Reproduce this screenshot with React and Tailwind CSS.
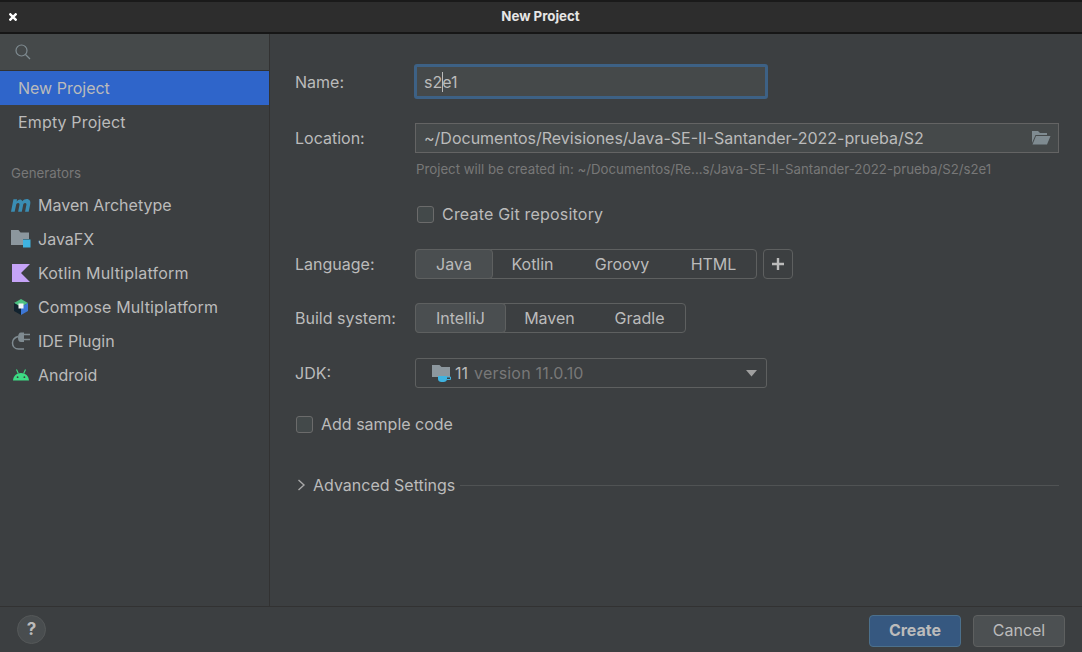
function MavenIcon() {
  return (
    <svg width="20" height="14" viewBox="1 3 16.5 10.2" preserveAspectRatio="none">
      <path d="M1 13 L3 4 H6 L5.7 5.5 C7 3.8 9.5 3.4 10.4 5.4 C12 3.4 15.5 3.2 16.6 5 C17.2 6 17 7 16.7 8.2 L15.6 13 H12.6 L13.7 8 C14 6.6 12.4 6 11.2 7.4 L9.9 13 H6.9 L8 8 C8.3 6.6 6.6 6 5.4 7.4 L4 13 Z" fill="#3a8db3" />
    </svg>
  )
}

function JavaFxIcon() {
  return (
    <svg width="20" height="18" viewBox="0 0 20 18">
      <path d="M0 0 H7.5 L9.5 2.5 H18 V9 H12 V15 H0 Z" fill="#8c979e" />
      <rect x="12" y="9.5" width="7.5" height="8" fill="#3fb3e0" />
    </svg>
  )
}

function KotlinIcon() {
  return (
    <svg width="20" height="20" viewBox="0 0 20 20">
      <path d="M1 1 H19 L10 10 L19 19 H1 Z" fill="#c5a3f7" />
    </svg>
  )
}

function ComposeIcon() {
  return (
    <svg width="18" height="18" viewBox="0 0 18 18">
      <path d="M9 1 L16 5 L9 9 L2 5 Z" fill="#4cc182" />
      <path d="M2 5 L9 9 V17 L2 13 Z" fill="#12232f" />
      <path d="M16 5 V13 L9 17 V9 Z" fill="#3d77d6" />
      <rect x="6.5" y="5.5" width="5" height="5" fill="#f2f5f5" />
    </svg>
  )
}

function PluginIcon() {
  return (
    <svg width="20" height="20" viewBox="0 0 20 20" fill="none">
      <path d="M10 1.5 H13 V11 H10 C8 11 7 9.5 7 6.5 C7 3.5 8 1.5 10 1.5 Z" fill="#7f8b91" />
      <path d="M13 3.5 H19 M13 8.5 H19" stroke="#7f8b91" strokeWidth="1.5" />
      <path d="M7 5.5 C3.5 6.5 1.5 9 1.5 12 C1.5 15.5 4 18 7.5 18 H13" stroke="#7f8b91" strokeWidth="1.5" />
    </svg>
  )
}

function AndroidIcon() {
  return (
    <svg width="18" height="12" viewBox="0 0 18 12" fill="none">
      <path d="M1 11.5 C1.2 7 4.6 4 9 4 C13.4 4 16.8 7 17 11.5 Z" fill="#3ddc84" />
      <path d="M4.5 0.5 L6.3 4.5 M13.5 0.5 L11.7 4.5" stroke="#3ddc84" strokeWidth="1.1" />
      <circle cx="5.6" cy="8.2" r="0.9" fill="#3c3f41" />
      <circle cx="12.4" cy="8.2" r="0.9" fill="#3c3f41" />
    </svg>
  )
}

function FolderOpenIcon() {
  return (
    <svg width="20" height="16" viewBox="0 0 20 16">
      <path d="M1 1 H7 L9 3 H16 V5 H4.5 L1 13 Z" fill="#7f8b91" />
      <path d="M5 6 H19.5 L16 14.5 H1.5 Z" fill="#7f8b91" />
    </svg>
  )
}

function JdkIcon() {
  return (
    <svg width="20" height="19" viewBox="0 0 20 19">
      <path d="M0 1 H7.5 L9.5 3 H18 V13 H0 Z" fill="#8c979e" />
      <path d="M6 12 H15 V15 C15 17 13.5 18 11.5 18 H9.5 C7.5 18 6 17 6 15 Z" fill="#3fb3e0" />
      <path d="M15 13 H18.5 V15.5 H15" fill="none" stroke="#3fb3e0" strokeWidth="1" />
    </svg>
  )
}

function Segmented({ items, widths }) {
  return (
    <div className="flex h-[30px] rounded-[4px] border border-[#5e6060]">
      {items.map((item, i) => (
        <div
          key={item}
          className={i === 0
            ? 'flex items-center justify-center -m-px h-[30px] rounded-[4px] border border-[#5e6060] bg-[#4a4e50]'
            : 'flex items-center justify-center'}
          style={{ width: widths[i] }}
        >
          {item}
        </div>
      ))}
    </div>
  )
}

const generators = [
  { name: 'Maven Archetype', icon: <MavenIcon />, text: '' },
  { name: 'JavaFX', icon: <JavaFxIcon />, text: '' },
  { name: 'Kotlin Multiplatform', icon: <KotlinIcon />, text: 'tracking-[0.2px]' },
  { name: 'Compose Multiplatform', icon: <ComposeIcon />, text: 'tracking-[0.15px]' },
  { name: 'IDE Plugin', icon: <PluginIcon />, text: '' },
  { name: 'Android', icon: <AndroidIcon />, text: '' },
]

export default function App() {
  return (
    <div className="flex flex-col w-[1082px] h-[652px] overflow-hidden bg-[#3c3f41] text-[16px] text-[#bbbbbb] font-['Inter',sans-serif]">
      <div className="flex items-center shrink-0 h-[34px] bg-[#2d2d2d] border-t-2 border-b-2 border-t-[#1a1a1a] border-b-[#161616] px-[9px]">
        <svg width="8" height="8" viewBox="0 0 8 8" fill="none" stroke="#ffffff" strokeWidth="2.4">
          <path d="M0.5 0.5 L7.5 7.5 M7.5 0.5 L0.5 7.5" />
        </svg>
        <span className="flex-1 text-center text-[13.3px] font-bold text-[#e6e6e6] pr-[9px]">New Project</span>
      </div>

      <div className="flex flex-1 min-h-0">
        <div className="flex flex-col shrink-0 w-[270px] border-r border-[#323232]">
          <div className="flex items-center h-[37px] px-[14px] bg-[#45494a] border-b border-[#323232]">
            <svg width="18" height="18" viewBox="0 0 18 18" fill="none" stroke="#7f8b91" strokeWidth="1.2">
              <circle cx="7.5" cy="7.5" r="5.5" />
              <path d="M11.5 11.5 L16 16" />
            </svg>
          </div>
          <div className="flex items-center h-[34px] pl-[18px] bg-[#2f65ca]">New Project</div>
          <div className="flex items-center h-[34px] pl-[18px] tracking-[0.15px]">Empty Project</div>
          <div className="flex items-center h-[34px] pl-[11px] mt-[18px] text-[13.3px] text-[#787878]">Generators</div>
          <div className="flex flex-col -mt-[3px]">
            {generators.map(g => (
              <div key={g.name} className="flex items-center h-[34px] pl-[11px] gap-[7px]">
                <span className="flex items-center justify-center w-[20px]">{g.icon}</span>
                <span className={g.text}>{g.name}</span>
              </div>
            ))}
          </div>
        </div>

        <div className="flex flex-col flex-1 pl-[25px] pr-[23px] pt-[30px]">
          <div className="flex items-center h-[35px]">
            <span className="w-[120px]">Name:</span>
            <div className="flex items-center w-[354px] h-[35px] -ml-[1px] pl-[7px] bg-[#45494a] border-[3px] border-[#3d6185] rounded-[3px] relative">
              s2e1
              <span className="absolute left-[25px] top-[5px] w-px h-[20px] bg-[#bbbbbb]" />
            </div>
          </div>

          <div className="flex items-center h-[30px] mt-[24px]">
            <span className="w-[120px]">Location:</span>
            <div className="flex items-center justify-between flex-1 h-[30px] pl-[8px] pr-[7px] bg-[#45494a] border border-[#646464]">
              ~/Documentos/Revisiones/Java-SE-II-Santander-2022-prueba/S2
              <FolderOpenIcon />
            </div>
          </div>

          <div className="mt-[7px] ml-[121px] h-[18px] text-[13.25px] leading-[18px] text-[#787878]">
            Project will be created in: ~/Documentos/Re...s/Java-SE-II-Santander-2022-prueba/S2/s2e1
          </div>

          <label className="flex items-center h-[20px] mt-[26px] ml-[122px] gap-[8px] tracking-[0.2px]">
            <span className="w-[17px] h-[17px] rounded-[3px] border border-[#6b6b6b] bg-[#43494a]" />
            Create Git repository
          </label>

          <div className="flex items-center h-[30px] mt-[25px]">
            <span className="w-[120px]">Language:</span>
            <Segmented items={['Java', 'Kotlin', 'Groovy', 'HTML']} widths={[78, 81, 98, 85]} />
            <div className="flex items-center justify-center w-[30px] h-[30px] ml-[6px] rounded-[4px] border border-[#5e6060]">
              <svg width="14" height="14" viewBox="0 0 14 14" fill="none" stroke="#bbbbbb" strokeWidth="2.4">
                <path d="M7 1 V13 M1 7 H13" />
              </svg>
            </div>
          </div>

          <div className="flex items-center h-[30px] mt-[24px]">
            <span className="w-[120px]">Build system:</span>
            <Segmented items={['IntelliJ', 'Maven', 'Gradle']} widths={[91, 89, 91]} />
          </div>

          <div className="flex items-center h-[30px] mt-[25px]">
            <span className="w-[120px]">JDK:</span>
            <div className="flex items-center w-[352px] h-[30px] pl-[16px] pr-[9px] rounded-[3px] border border-[#5e6060] gap-[3px]">
              <JdkIcon />
              <span className="text-[#bbbbbb]">11</span>
              <span className="ml-[3px] tracking-[0.2px] text-[#787878]">version 11.0.10</span>
              <svg className="ml-auto" width="11" height="7" viewBox="0 0 11 7">
                <path d="M0 0 H11 L5.5 6.5 Z" fill="#a0a0a0" />
              </svg>
            </div>
          </div>

          <label className="flex items-center h-[20px] mt-[26px] ml-[1px] gap-[8px]">
            <span className="w-[17px] h-[17px] rounded-[3px] border border-[#6b6b6b] bg-[#43494a]" />
            Add sample code
          </label>

          <div className="flex items-center h-[20px] mt-[41px]">
            <svg className="ml-[2px]" width="10" height="12" viewBox="0 0 10 12" fill="none" stroke="#a8a8a8" strokeWidth="1.4">
              <path d="M1.5 1 L7 6 L1.5 11" />
            </svg>
            <span className="ml-[6px]">Advanced Settings</span>
            <span className="flex-1 h-px ml-[5px] bg-[#505354]" />
          </div>
        </div>
      </div>

      <div className="flex items-center justify-between shrink-0 h-[46px] pl-[17px] pr-[17px] border-t border-[#323232]">
        <div className="flex items-center justify-center w-[29px] h-[29px] rounded-full bg-[#494d4f] border border-[#555859] text-[17px] font-bold">?</div>
        <div className="flex gap-[12px] pt-[2px]">
          <div className="flex items-center justify-center w-[92px] h-[32px] pb-px rounded-[4px] bg-[#365880] border border-[#4c708c] font-bold">Create</div>
          <div className="flex items-center justify-center w-[92px] h-[32px] pb-px rounded-[4px] bg-[#4c5052] border border-[#5e6060]">Cancel</div>
        </div>
      </div>
    </div>
  )
}
